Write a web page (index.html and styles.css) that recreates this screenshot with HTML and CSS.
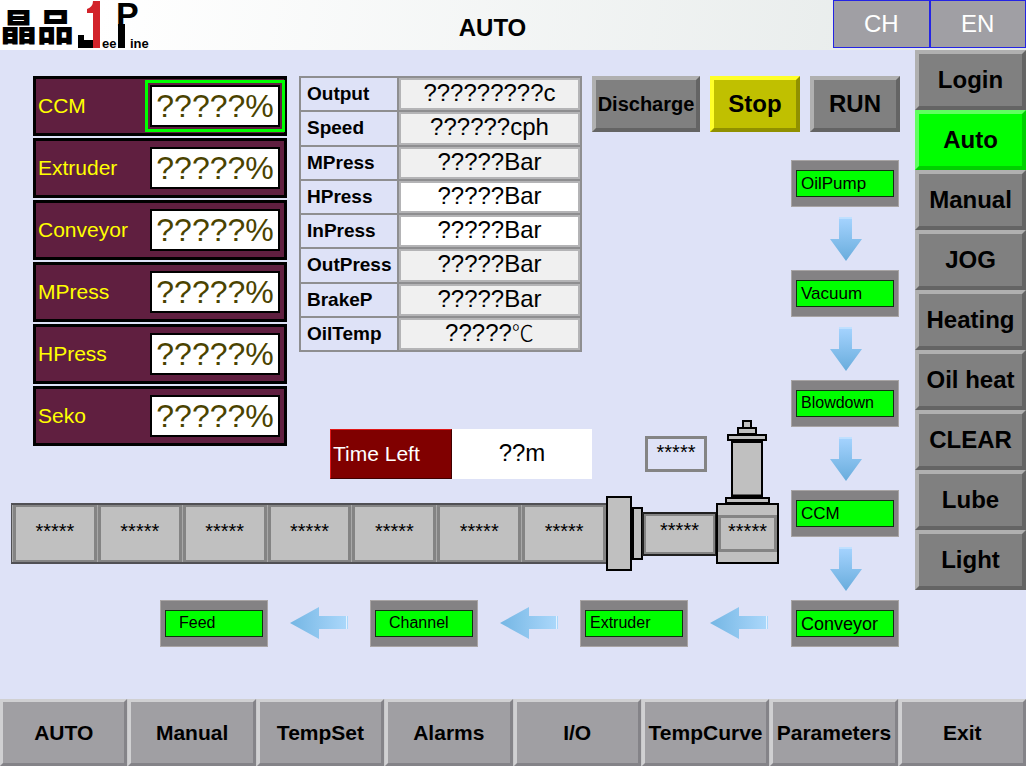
FILE: index.html
```html
<!DOCTYPE html>
<html lang="en">
<head>
<meta charset="utf-8">
<meta name="viewport" content="width=device-width, initial-scale=1">
<title>AUTO</title>
<link rel="stylesheet" href="styles.css">
</head>
<body>
<svg class="defs" aria-hidden="true">
  <defs>
    <linearGradient id="fade-down" x1="0" y1="0" x2="0" y2="1"><stop offset="0" stop-color="#a6d4ff"/><stop offset="1" stop-color="#68acdc"/></linearGradient>
    <linearGradient id="fade-left" x1="1" y1="0" x2="0" y2="0"><stop offset="0" stop-color="#acd8fb"/><stop offset="1" stop-color="#74b6e4"/></linearGradient>
    <symbol id="arrow-down" viewBox="0 0 32 44"><path d="M9 0H22V22H32L16 44L0 22H9Z" fill="url(#fade-down)"/><path d="M9 1H22" stroke="#d8ecff" stroke-width="1"/></symbol>
    <symbol id="arrow-left" viewBox="0 0 58 32"><path d="M58 9V22H29V32L0 16L29 0V9Z" fill="url(#fade-left)"/><path d="M56.500 9V22" stroke="#e2f1ff" stroke-width="1"/></symbol>
  </defs>
</svg>

<header class="topbar">
  <svg class="logo" viewBox="0 0 152 50" role="img" aria-label="JeePine">
    <text class="logo-han" x="0" y="41">晶品</text>
    <path d="M78 35H84V40H93V48H78Z" fill="#000"/>
    <path d="M93 1H100V48H93V13H87V9Q93 7 93 1Z" fill="#d2232a"/>
    <text class="logo-small" x="102" y="48">ee</text>
    <text class="logo-big" x="116" y="26">P</text>
    <rect x="118" y="24" width="7" height="24" fill="#000"/>
    <text class="logo-small" x="130" y="48">ine</text>
  </svg>
  <h1 class="title">AUTO</h1>
  <div class="langs">
    <button class="lang" type="button">CH</button>
    <button class="lang" type="button">EN</button>
  </div>
</header>

<div class="main">
  <main class="work">
    <div class="meters">
      <div class="meter"><label for="m1">CCM</label><input id="m1" class="meter-value is-active" value="?????%"></div>
      <div class="meter"><label for="m2">Extruder</label><input id="m2" class="meter-value" value="?????%"></div>
      <div class="meter"><label for="m3">Conveyor</label><input id="m3" class="meter-value" value="?????%"></div>
      <div class="meter"><label for="m4">MPress</label><input id="m4" class="meter-value" value="?????%"></div>
      <div class="meter"><label for="m5">HPress</label><input id="m5" class="meter-value" value="?????%"></div>
      <div class="meter"><label for="m6">Seko</label><input id="m6" class="meter-value" value="?????%"></div>
    </div>

    <table class="readings">
      <tbody>
        <tr><th scope="row">Output</th><td>?????????c</td></tr>
        <tr><th scope="row">Speed</th><td>??????cph</td></tr>
        <tr><th scope="row">MPress</th><td>?????Bar</td></tr>
        <tr><th scope="row">HPress</th><td class="editable">?????Bar</td></tr>
        <tr><th scope="row">InPress</th><td class="editable">?????Bar</td></tr>
        <tr><th scope="row">OutPress</th><td>?????Bar</td></tr>
        <tr><th scope="row">BrakeP</th><td>?????Bar</td></tr>
        <tr><th scope="row">OilTemp</th><td>?????<span class="unit">℃</span></td></tr>
      </tbody>
    </table>

    <div class="commands">
      <button class="key discharge" type="button">Discharge</button>
      <button class="key stop" type="button">Stop</button>
      <button class="key" type="button">RUN</button>
    </div>

    <div class="process">
      <div class="node"><span class="state">OilPump</span></div>
      <div class="link"><svg class="arrow-down"><use href="#arrow-down"/></svg></div>
      <div class="node"><span class="state">Vacuum</span></div>
      <div class="link"><svg class="arrow-down"><use href="#arrow-down"/></svg></div>
      <div class="node"><span class="state small">Blowdown</span></div>
      <div class="link"><svg class="arrow-down"><use href="#arrow-down"/></svg></div>
      <div class="node"><span class="state">CCM</span></div>
      <div class="link"><svg class="arrow-down"><use href="#arrow-down"/></svg></div>
      <div class="node"><span class="state large">Conveyor</span></div>
    </div>

    <div class="status">
      <div class="timer"><span class="timer-label">Time Left</span><span class="timer-value">??m</span></div>
      <div class="probe">*****</div>
      <svg class="tower" viewBox="0 0 63 83" aria-hidden="true">
        <g fill="#c0c0c0" stroke="#000" stroke-width="2">
          <rect x="27" y="1" width="8" height="7"/>
          <rect x="22" y="8" width="18" height="6"/>
          <rect x="16" y="21" width="30" height="56"/>
          <rect x="12" y="15" width="38" height="5"/>
          <path d="M15 21.500H47" stroke-width="3"/>
          <path d="M15 76H47" stroke-width="3"/>
          <rect x="10" y="78" width="43" height="5"/>
        </g>
      </svg>
    </div>

    <div class="machine">
      <div class="barrel">
        <span class="zone">*****</span><span class="zone">*****</span><span class="zone">*****</span><span class="zone">*****</span><span class="zone">*****</span><span class="zone">*****</span><span class="zone">*****</span>
      </div>
      <div class="flange"></div>
      <div class="ring"></div>
      <div class="neck">*****</div>
      <div class="die"><span class="die-zone">*****</span></div>
    </div>

    <div class="outfeed">
      <div class="node"><span class="state small inset">Feed</span></div>
      <svg class="arrow-left"><use href="#arrow-left"/></svg>
      <div class="node"><span class="state small inset">Channel</span></div>
      <svg class="arrow-left"><use href="#arrow-left"/></svg>
      <div class="node"><span class="state small">Extruder</span></div>
      <svg class="arrow-left"><use href="#arrow-left"/></svg>
    </div>
  </main>

  <nav class="side" aria-label="Modes">
    <button class="key" type="button">Login</button>
    <button class="key current" type="button">Auto</button>
    <button class="key" type="button">Manual</button>
    <button class="key" type="button">JOG</button>
    <button class="key" type="button">Heating</button>
    <button class="key" type="button">Oil heat</button>
    <button class="key" type="button">CLEAR</button>
    <button class="key" type="button">Lube</button>
    <button class="key" type="button">Light</button>
  </nav>
</div>

<nav class="pages" aria-label="Pages">
  <button class="page" type="button">AUTO</button>
  <button class="page" type="button">Manual</button>
  <button class="page" type="button">TempSet</button>
  <button class="page" type="button">Alarms</button>
  <button class="page" type="button">I/O</button>
  <button class="page" type="button">TempCurve</button>
  <button class="page" type="button">Parameters</button>
  <button class="page" type="button">Exit</button>
</nav>
</body>
</html>
```

FILE: styles.css
```css
* { box-sizing: border-box; }

body {
  margin: 0;
  min-height: 100vh;
  display: flex;
  flex-direction: column;
  background: #dee2f7;
  color: #000;
  font-family: "Liberation Sans", Arial, "Noto Sans CJK SC", sans-serif;
}

button, input { font-family: inherit; color: inherit; margin: 0; border-radius: 0; }
button { padding: 0; white-space: nowrap; }

.defs { position: absolute; width: 0; height: 0; }

/* Top bar */
.topbar {
  display: grid;
  grid-template-columns: 152px 1fr 193px;
  height: 50px;
  background: linear-gradient(100deg, #ffffff 10%, #e4e9e8);
}
.logo { width: 152px; height: 50px; overflow: visible; }
.logo-han { font: 900 37px "Noto Sans CJK SC", sans-serif; }
.logo-small { font: bold 13px "Liberation Sans", sans-serif; }
.logo-big { font: bold 34px "Liberation Sans", sans-serif; }
.title { margin: 0; padding-top: 6px; align-self: center; text-align: center; font-size: 24px; line-height: 28px; }
.langs { display: grid; grid-template-columns: 1fr 1fr; height: 48px; }
.lang { border: 1px solid #2424e4; background: #a09fa4; color: #fff; font-size: 24px; }

/* Main area */
.main { flex: 1; display: flex; }
.work {
  flex: 1;
  display: grid;
  grid-template-columns: 276px 283px 1fr 109px;
  grid-template-rows: 56px 288px 76px 75px auto;
  column-gap: 12px;
  align-content: start;
  padding: 26px 15px 26px 11px;
}

.meters { grid-column: 1; grid-row: 1 / 4; align-self: start; display: grid; gap: 2px; margin-left: 22px; }
.meter {
  display: flex;
  align-items: center;
  justify-content: space-between;
  height: 60px;
  padding: 0 4px 0 2px;
  border: 3px solid #000;
  background: #601f40;
  color: #ffff00;
  font-size: 21px;
}
.meter-value {
  width: 130px;
  height: 42px;
  padding: 0;
  border: 2px solid #000;
  background: #fff;
  color: #4a4300;
  font-size: 32px;
  text-align: center;
}
.meter-value.is-active { outline: 3px solid #00ff00; outline-offset: 2px; }

.readings { grid-column: 2; grid-row: 1 / 3; align-self: start; width: 100%; height: 276px; border-collapse: collapse; table-layout: fixed; }
.readings th, .readings td { height: 34px; padding: 0; border: 2px solid #8e8e90; line-height: 30px; }
.readings th { width: 98px; padding-left: 6px; text-align: left; font-size: 19px; }
.readings td { background: #f0f0f0; box-shadow: inset 0 0 0 2px #b4b4b6; padding-bottom: 2px; text-align: center; font-size: 24px; }
.readings .editable { background: #fff; }
.unit { font-family: "Noto Sans CJK SC", sans-serif; font-weight: 300; font-size: 22px; line-height: 24px; }

/* Bevelled push buttons */
.key {
  border: 4px solid;
  border-color: #b0b0b0 #646464 #646464 #b0b0b0;
  background: #808080;
  font-size: 24px;
  font-weight: bold;
}
.key.stop { border-color: #ffff28 #909000 #909000 #ffff28; background: #c0c000; }
.key.current { border-color: #60ff60 #00d000 #00d000 #60ff60; background: #00ff00; }
.key.discharge { font-size: 20px; }

.commands {
  grid-column: 3 / 5;
  grid-row: 1;
  justify-self: end;
  display: grid;
  grid-template-columns: 108px 90px 90px;
  gap: 10px;
}

/* Process chain */
.process { grid-column: 4; grid-row: 2 / 6; margin-top: 28px; }
.link { height: 63px; display: flex; align-items: center; justify-content: center; }
.arrow-down { width: 32px; height: 44px; }
.arrow-left { width: 58px; height: 32px; }
.node { width: 108px; height: 47px; padding: 9px 4px; border: 1px solid #a8a4a4; background: #848284; }
.state {
  display: block;
  height: 27px;
  padding-left: 4px;
  border: 1px solid #103010;
  background: #00ff00;
  font-size: 17px;
  line-height: 26px;
}
.state.large { font-size: 18px; }
.state.small { font-size: 16px; line-height: 24px; }
.state.inset { padding-left: 13px; }

.outfeed {
  grid-column: 1 / 4;
  grid-row: 5;
  display: flex;
  align-items: center;
  justify-content: flex-end;
  gap: 22px;
  padding: 28px 11px 0 0;
}

/* Timer, probe and feed tower */
.status { grid-column: 2 / 4; grid-row: 3; display: flex; align-items: flex-start; padding-left: 31px; }
.timer { display: flex; margin-top: 9px; height: 50px; line-height: 48px; }
.timer-label { width: 122px; padding-left: 2px; border: 1px solid; border-color: #e01818 #400000 #400000 #e01818; background: #800000; color: #fff; font-size: 21px; }
.timer-value { width: 140px; background: #fff; text-align: center; font-size: 24px; }
.probe { width: 62px; height: 36px; margin: 16px 0 0 53px; border: 3px solid #848484; text-align: center; font-size: 20px; line-height: 26px; }
.tower { width: 63px; height: 83px; margin-left: auto; }

/* Extruder barrel */
.machine { grid-column: 1 / 4; grid-row: 4; display: flex; align-items: center; text-align: center; font-size: 20px; }
.barrel { flex: 1; display: flex; gap: 1px; height: 61px; padding-left: 1px; background: #a8a8a8; border: solid #505054; border-width: 2px 0 2px 1px; }
.zone { flex: 1; border: 3px solid #848484; border-width: 2px 3px; background: #c0c0c0; line-height: 48px; }
.flange { width: 26px; height: 75px; border: 2px solid #000; background: #c0c0c0; }
.ring { width: 11px; height: 53px; border: 2px solid #000; background: #c0c0c0; }
.neck { width: 73px; height: 42px; border: 3px solid #848484; background: #c0c0c0; outline: 2px solid #202020; outline-offset: -1px; line-height: 28px; }
.die { width: 63px; height: 61px; padding: 10px 0; border: 2px solid #000; background: #c0c0c0; }
.die-zone { display: block; height: 37px; border: 3px solid #848484; line-height: 26px; }

/* Side and page navigation */
.side { width: 111px; display: grid; grid-auto-rows: 60px; align-content: start; }
.pages { display: grid; grid-template-columns: repeat(8, 1fr); gap: 1px; height: 67px; background: #c8c8ca; }
.page {
  border: 3px solid;
  border-color: #d0d0d2 #848388 #848388 #d0d0d2;
  background: #a09fa3;
  font-size: 21px;
  font-weight: bold;
}
```
